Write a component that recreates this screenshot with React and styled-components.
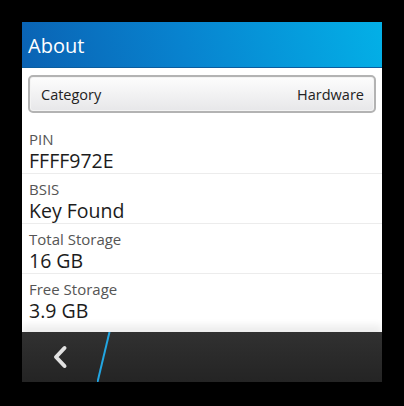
import React from 'react';
import styled, { createGlobalStyle } from 'styled-components';

const GlobalStyle = createGlobalStyle`
  html, body {
    margin: 0;
    padding: 0;
    background: #000;
  }
`;

const Page = styled.div`
  width: 404px;
  height: 406px;
  background: #000;
  padding: 22px;
  box-sizing: border-box;
  font-family: "Open Sans", "Noto Sans", sans-serif;
`;

const Screen = styled.div`
  width: 360px;
  height: 360px;
  display: flex;
  flex-direction: column;
  background: #fff;
  overflow: hidden;
`;

const TitleBar = styled.div`
  height: 46px;
  flex: none;
  display: flex;
  align-items: center;
  padding: 2px 0 0 6px;
  box-sizing: border-box;
  background: linear-gradient(75deg, #0a62b3 0%, #0883cf 45%, #03b0e7 100%);
  border-bottom: 1px solid #0a5d9f;
  color: #fff;
  font-size: 20px;
`;

const Content = styled.div`
  flex: 1;
  display: flex;
  flex-direction: column;
  padding: 7px 6px 0 6px;
`;

const DropDown = styled.div`
  height: 38px;
  box-sizing: border-box;
  display: flex;
  align-items: center;
  justify-content: space-between;
  padding: 0 10px 0 11px;
  border: 2px solid #b3b3b3;
  border-radius: 5px;
  box-shadow: inset 0 0 0 1px #f4f4f4;
  background: linear-gradient(#fdfdfd, #e7e7e9);
  color: #222;
  font-size: 14.5px;
`;

const List = styled.div`
  margin: 11px -6px 0 -6px;
  display: flex;
  flex-direction: column;
`;

const Row = styled.div`
  height: 50px;
  box-sizing: border-box;
  padding: 6px 0 0 7px;
  border-bottom: ${(p) => (p.last ? 'none' : '1px solid #ececec')};
`;

const Label = styled.div`
  font-size: 15px;
  line-height: 18px;
  color: #555;
`;

const Value = styled.div`
  font-size: 19.5px;
  line-height: 24px;
  margin-top: 1px;
  color: #1c1c1c;
`;

const ActionBar = styled.div`
  height: 50px;
  flex: none;
  display: flex;
  background: linear-gradient(#313131, #242424);
  box-shadow: 0 -7px 7px rgba(0, 0, 0, 0.07);
`;

const BackButton = styled.div`
  width: 75px;
  display: flex;
  align-items: center;
  justify-content: center;
`;

const items = [
  { label: 'PIN', value: 'FFFF972E' },
  { label: 'BSIS', value: 'Key Found' },
  { label: 'Total Storage', value: '16 GB' },
  { label: 'Free Storage', value: '3.9 GB' },
];

const App = () => {
  return (
    <Page>
      <GlobalStyle />
      <Screen>
        <TitleBar>About</TitleBar>
        <Content>
          <DropDown>
            <span>Category</span>
            <span>Hardware</span>
          </DropDown>
          <List>
            {items.map((it, i) => (
              <Row key={it.label} last={i === items.length - 1}>
                <Label>{it.label}</Label>
                <Value>{it.value}</Value>
              </Row>
            ))}
          </List>
        </Content>
        <ActionBar>
          <BackButton>
            <svg width="16" height="24" viewBox="0 0 16 24">
              <polyline
                points="12.5,3 4,12 12.5,21"
                fill="none"
                stroke="#e2e2e2"
                strokeWidth="4"
                strokeLinecap="round"
                strokeLinejoin="round"
              />
            </svg>
          </BackButton>
          <svg width="14" height="50" viewBox="0 0 14 50">
            <line x1="12.5" y1="0" x2="0.5" y2="50" stroke="#22a6e2" strokeWidth="2" />
          </svg>
        </ActionBar>
      </Screen>
    </Page>
  );
};

export default App;
